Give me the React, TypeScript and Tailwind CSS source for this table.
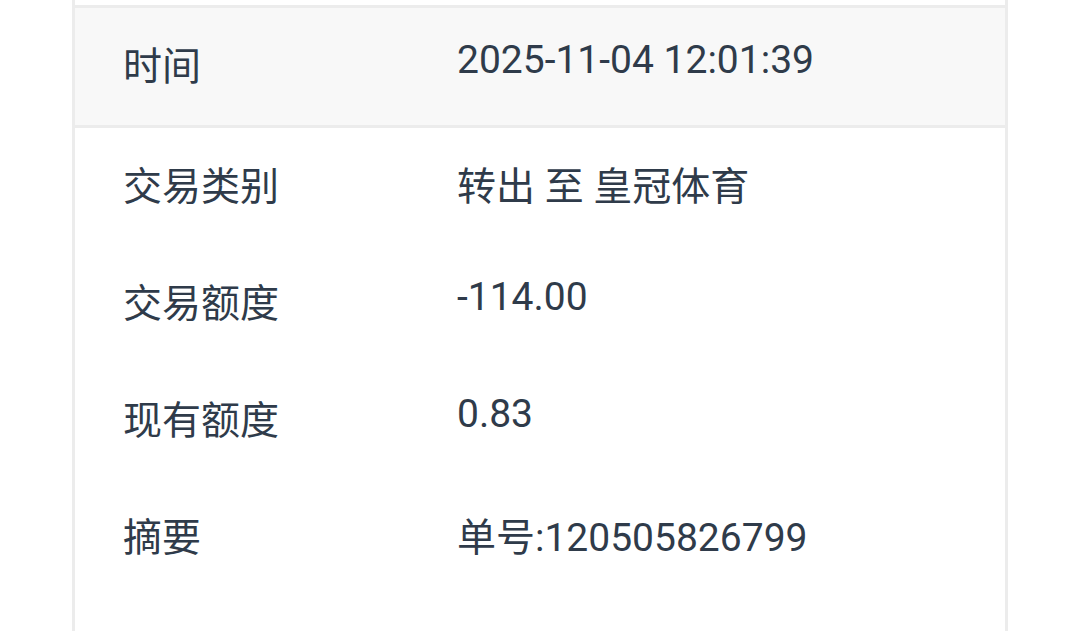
const rows = [
  { label: "交易类别", value: "转出 至 皇冠体育" },
  { label: "交易额度", value: "-114.00", latin: true },
  { label: "现有额度", value: "0.83", latin: true },
  { label: "摘要", value: "单号:120505826799" },
];

function Row({ label, value, head, latin }: { label: string; value: string; head?: boolean; latin?: boolean }) {
  return (
    <div className={`flex pt-[30px] ${head ? "h-[120px] border-b-[3px] border-[#ececec] bg-[#f8f8f8]" : "h-[117px]"}`}>
      <div className="w-[382px] shrink-0 pl-[48px]">{label}</div>
      <div className={latin ? "-mt-[7px]" : ""}>{value}</div>
    </div>
  );
}

export default function App() {
  return (
    <div
      className="h-[631px] overflow-hidden bg-white pl-[72px] text-[39px] leading-normal text-[#2f3b4a]"
      style={{ fontFamily: 'Roboto, "Noto Sans CJK SC", sans-serif' }}
    >
      <div className="h-[700px] w-[936px] border-x-[3px] border-[#ececec]">
        <div className="h-[8px] border-b-[3px] border-[#ececec]" />
        <Row head latin label="时间" value="2025-11-04 12:01:39" />
        {rows.map((r) => (
          <Row key={r.label} label={r.label} value={r.value} latin={r.latin} />
        ))}
      </div>
    </div>
  );
}
